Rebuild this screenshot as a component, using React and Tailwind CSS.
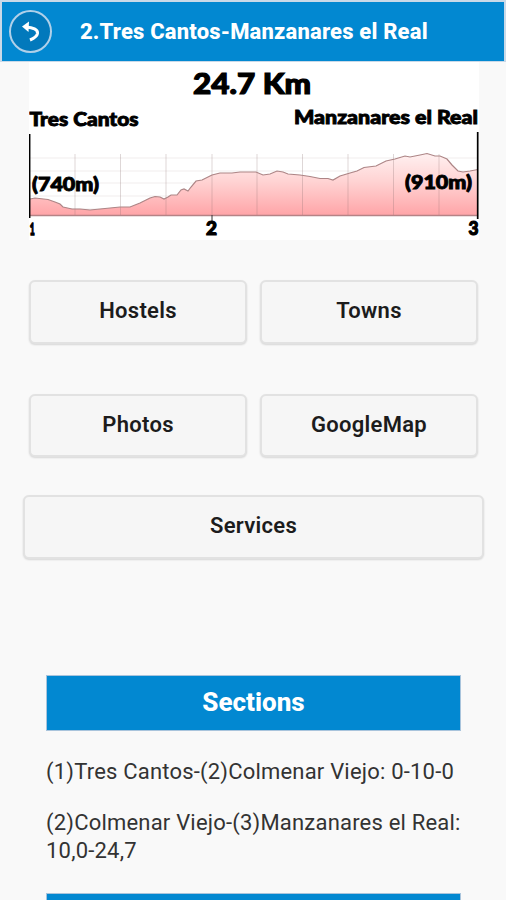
const GRID_X = [75, 120.5, 166, 212, 257, 302.5, 348, 393.5, 439];
const GRID_Y = [158, 171, 183, 196, 209];

const PROFILE = [
  [30, 199], [35, 198], [48, 199.5], [55, 202], [60, 204], [63, 207], [72, 209], [80, 209], [90, 210], [100, 209],
  [110, 208], [120, 207], [130, 207], [140, 203], [150, 198], [155, 196.5], [160, 197], [164, 199], [168, 197],
  [171, 195], [177, 195], [181, 190], [184, 189], [188, 191], [191, 187], [196, 181], [202, 180], [212, 175],
  [220, 173], [232, 173], [240, 172], [256, 172], [263, 175], [270, 174], [277, 171], [283, 172], [288, 174],
  [300, 175], [310, 176.5], [320, 178.5], [328, 178.5], [333, 180], [340, 176], [350, 173], [357, 171],
  [364, 167.5], [376, 166], [386, 161], [395, 159], [405, 156], [410, 157], [420, 155], [427, 153.5], [435, 156],
  [440, 156], [447, 159], [452, 165], [458, 171], [463, 172], [470, 171], [478, 169.5],
];

const LABELS = [
  { text: '24.7 Km', x: 193, y: 93.5, size: 29, width: 118, stroke: 1.2 },
  { text: 'Tres Cantos', x: 29.5, y: 126, size: 19, width: 109, stroke: 0.9 },
  { text: 'Manzanares el Real', x: 294, y: 124, size: 19, width: 184, stroke: 0.9 },
  { text: '(740m)', x: 32, y: 191, size: 18, width: 67, stroke: 0.9 },
  { text: '(910m)', x: 405, y: 189, size: 18, width: 67, stroke: 0.9 },
  { text: '1', x: 29.8, y: 235, size: 17, width: 5, stroke: 1.4 },
  { text: '2', x: 206, y: 235, size: 18, width: 11, stroke: 1.2 },
  { text: '3', x: 468.5, y: 235, size: 18, width: 10, stroke: 1.2 },
];

const SECTIONS = [
  '(1)Tres Cantos-(2)Colmenar Viejo: 0-10-0',
  '(2)Colmenar Viejo-(3)Manzanares el Real: 10,0-24,7',
];

const Header = () => (
  <header className="mx-[2px] mt-[2px] flex h-[59px] items-center bg-[#0288d1]">
    <button type="button" aria-label="Back" className="ml-[7px] flex h-[43px] w-[43px] items-center justify-center rounded-full border-2 border-[#b0d0e9] bg-[#0279bc]">
      <svg width="20" height="22" viewBox="0 0 20 22" fill="none">
        <path d="M1 5.5L8 0.5L7.5 11Z" fill="white" />
        <path d="M5 6C12 6.5 17 8.5 16.5 12.5C16 15.5 12.5 17.5 9 19" stroke="white" strokeWidth="3" />
      </svg>
    </button>
    <h1 className="ml-[28px] text-[22px] font-extrabold leading-none tracking-[0.18px] whitespace-nowrap text-white">2.Tres Cantos-Manzanares el Real</h1>
  </header>
);

const ElevationProfile = () => {
  const line = PROFILE.map(([x, y]) => `${x},${y}`).join(' ');

  return (
    <svg className="ml-[29px] block bg-white" width="450" height="178" viewBox="29 62 450 178">
      <defs>
        <linearGradient id="elevation" x1="0" y1="154" x2="0" y2="215" gradientUnits="userSpaceOnUse">
          <stop offset="0" stopColor="#fff0f0" />
          <stop offset="0.45" stopColor="#ffd3d3" />
          <stop offset="1" stopColor="#ffa5a8" />
        </linearGradient>
      </defs>
      {GRID_Y.map(y => (
        <line key={y} x1="30" x2="478" y1={y} y2={y} stroke="#f1eded" />
      ))}
      <polygon points={`30,215 ${line} 478,215`} fill="url(#elevation)" />
      {GRID_X.map(x => (
        <line key={x} x1={x} x2={x} y1="154" y2="215" stroke="#8a7070" strokeOpacity="0.28" />
      ))}
      <polyline points={line} fill="none" stroke="#ad8586" strokeWidth="1.2" />
      <line x1="30" x2="478" y1="215.5" y2="215.5" stroke="#b58386" strokeWidth="1.5" />
      <line x1="29.7" x2="29.7" y1="134" y2="218" stroke="black" strokeWidth="1.5" />
      <line x1="477.7" x2="477.7" y1="132" y2="219" stroke="black" strokeWidth="1.7" />
      <line x1="212" x2="212" y1="215" y2="221" stroke="#333" />
      {LABELS.map(l => (
        <text key={l.text} x={l.x} y={l.y} fontSize={l.size} textLength={l.width} lengthAdjust="spacingAndGlyphs" stroke="black" strokeWidth={l.stroke} className="font-[Lato,sans-serif] font-black">
          {l.text}
        </text>
      ))}
    </svg>
  );
};

const MenuButton = ({ label, className }) => (
  <button type="button" className={`rounded-[6px] border-2 border-[#e2e2e2] bg-[#f6f6f6] pb-[3px] text-[22px] font-semibold tracking-[0.3px] text-[#1c1c1c] shadow-[0_1px_2px_rgba(0,0,0,0.14)] ${className}`}>
    {label}
  </button>
);

const App = () => (
  <div className="h-[900px] w-[506px] overflow-hidden bg-[#f9f9f9] font-[Roboto,sans-serif]">
    <div className="h-[62px] overflow-hidden bg-[#c9d9e8]">
      <Header />
    </div>
    <ElevationProfile />

    <div className="mt-[40px] grid grid-cols-2 gap-x-[13px] pr-[28px] pl-[29px]">
      <MenuButton label="Hostels" className="h-[64px]" />
      <MenuButton label="Towns" className="h-[64px]" />
      <MenuButton label="Photos" className="mt-[50px] h-[63px]" />
      <MenuButton label="GoogleMap" className="mt-[50px] h-[63px]" />
    </div>
    <div className="mt-[38px] flex pr-[22px] pl-[23px]">
      <MenuButton label="Services" className="h-[64px] flex-1" />
    </div>

    <div className="mt-[116px] mr-[45px] ml-[46px]">
      <h2 className="flex h-[56px] items-center justify-center border border-[#a9c4dc] bg-[#0288d1] pb-[2px] text-[26px] font-extrabold text-white">Sections</h2>
      <div className="mt-[27px] text-[22px] leading-[28px] tracking-[0.2px] text-[#333]">
        {SECTIONS.map(s => (
          <p key={s} className="-mr-[10px] mb-[23px]">{s}</p>
        ))}
      </div>
      <div className="mt-[28px] h-[56px] border border-[#a9c4dc] bg-[#0288d1]" />
    </div>
  </div>
);

export default App;
